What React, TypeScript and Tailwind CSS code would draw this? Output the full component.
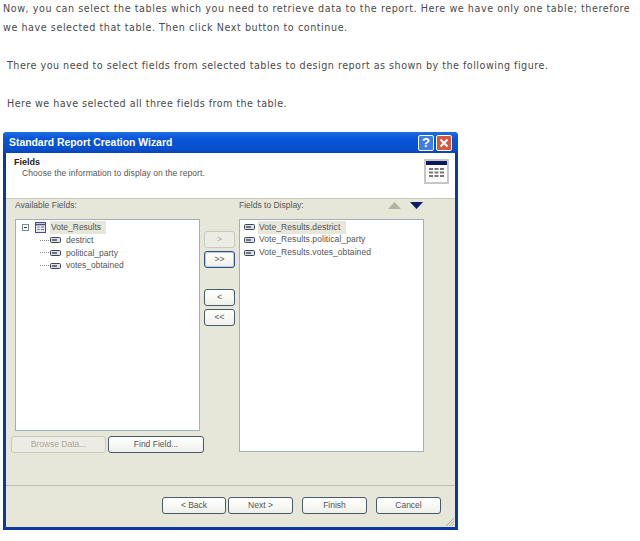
const FIELDS = ["destrict", "political_party", "votes_obtained"];

function FieldIcon() {
  return (
    <svg width="11" height="6" viewBox="0 0 11 6" className="shrink-0">
      <rect x="0.5" y="0.5" width="10" height="5" rx="1" fill="#dfe3e8" stroke="#3c4250" />
      <path d="M2 3h5" stroke="#3c4250" strokeWidth="1.4" />
    </svg>
  );
}

function TableIcon() {
  return (
    <svg width="11" height="11" viewBox="0 0 11 11" className="shrink-0">
      <rect x="0.5" y="0.5" width="10" height="10" fill="#e8e8f4" stroke="#4a4a86" />
      <path d="M1 2.500h9" stroke="#4a4a86" strokeWidth="1.4" />
      <path d="M2.500 5h2M2.500 7.500h2M6 5h3M6 7.500h3" stroke="#6a6a8a" />
    </svg>
  );
}

function WizButton({
  label,
  width,
  disabled,
  active,
}: {
  label: string;
  width: string;
  disabled?: boolean;
  active?: boolean;
}) {
  const border = disabled
    ? "border-[#c9c9bd] text-[#a8a8a0] bg-[#ecece4]"
    : active
      ? "border-[#35507c] text-[#555] bg-[linear-gradient(#ffffff,#f0f0ea)] shadow-[inset_0_0_0_1px_#b4cdec]"
      : "border-[#4b5a68] text-[#555] bg-[linear-gradient(#ffffff,#f0f0ea)]";
  return (
    <div
      className={`${width} h-[17px] shrink-0 flex items-center justify-center rounded-[3px] border text-[8.5px] leading-none ${border}`}
    >
      {label}
    </div>
  );
}

export default function App() {
  return (
    <div className="w-[640px] h-[541px] overflow-hidden bg-white font-['DejaVu_Sans',sans-serif] text-[#4a4a4a]">
      <div className="-mt-[1px] text-[9.6px] leading-[19px] tracking-[0.56px]">
        <p className="pl-[3px] whitespace-nowrap">
          Now, you can select the tables which you need to retrieve data to the report. Here we have only one table; therefore
        </p>
        <p className="pl-[3px] whitespace-nowrap">
          we have selected that table. Then click Next button to continue.
        </p>
        <p className="pl-[7px] mt-[19px] whitespace-nowrap tracking-[0.49px]">
          There you need to select fields from selected tables to design report as shown by the following figure.
        </p>
        <p className="pl-[7px] mt-[19px] whitespace-nowrap tracking-[0.45px]">
          Here we have selected all three fields from the table.
        </p>
      </div>

      {/* Wizard window */}
      <div className="ml-[3px] mt-[19px] w-[455px] h-[398px] flex flex-col border-x-[3px] border-b-[3px] border-[#0a3aa0] rounded-t-[4px] bg-[#e6e6d9] relative">
        <div className="-mx-[3px] h-[21px] shrink-0 flex items-center justify-between pl-[6px] pr-[6px] rounded-t-[4px] bg-[linear-gradient(#1f6fe0,#0a55d8_30%,#0650d0_80%,#0a44b0)]">
          <span className="font-['Liberation_Sans',sans-serif] font-bold text-[10.4px] text-white">
            Standard Report Creation Wizard
          </span>
          <div className="flex gap-[2px]">
            <div className="w-[16px] h-[16px] rounded-[2px] border border-white bg-[#3f7ee0] flex items-center justify-center font-['Liberation_Sans',sans-serif] font-bold text-[13px] leading-none text-white">
              ?
            </div>
            <div className="w-[16px] h-[16px] rounded-[2px] border border-white bg-[#d9583c] flex items-center justify-center">
              <svg width="10" height="10" viewBox="0 0 10 10">
                <path d="M1.500 1.500l7 7M8.500 1.500l-7 7" stroke="#fff" strokeWidth="2" />
              </svg>
            </div>
          </div>
        </div>

        <div className="h-[46px] shrink-0 bg-white border-b border-[#c8c8ba] flex justify-between pl-[8px] pr-[6px] pt-[4px] font-['Liberation_Sans',sans-serif]">
          <div>
            <div className="font-bold text-[9px] leading-[11px] text-[#222]">
              Fields
            </div>
            <div className="pl-[8px] text-[8.5px] leading-[11px] tracking-[0.08px] text-[#555]">
              Choose the information to display on the report.
            </div>
          </div>
          <div className="w-[25px] h-[25px] mt-[2px] bg-[#c6c6c6] p-[2px]">
            <svg width="21" height="21" viewBox="0 0 21 21">
              <rect width="21" height="21" fill="#fff" />
              <rect width="21" height="4" fill="#0a1a5c" />
              <path d="M3 8h4M8.500 8h4M14 8h4M3 11.500h4M8.500 11.500h4M14 11.500h4M3 15h4M8.500 15h4M14 15h4" stroke="#777" strokeWidth="2" />
            </svg>
          </div>
        </div>

        <div className="flex-1 flex flex-col font-['Liberation_Sans',sans-serif] text-[8.5px] text-[#555]">
          <div className="flex-1 flex pl-[9px] gap-[4px] border-b border-[#bdbdae]">
            <div className="w-[185px] shrink-0">
              <div className="h-[20px] pb-[7px] flex items-center">Available Fields:</div>
              <div className="h-[212px] bg-white border border-[#9fb0bc] pt-[1px] pl-[6px]">
                <div className="flex items-center h-[13px]">
                  <div className="w-[7px] h-[7px] border border-[#7a8a9a] mr-[6px] flex items-center justify-center">
                    <div className="w-[3px] h-px bg-[#333]" />
                  </div>
                  <TableIcon />
                  <span className="ml-[4px] px-[1px] w-[56px] bg-[#e6e6d9] leading-[13px]">Vote_Results</span>
                </div>
                {FIELDS.map((f) => (
                  <div key={f} className="flex items-center h-[12.67px] pl-[18px] whitespace-nowrap">
                    <div className="w-[9px] border-t border-dotted border-[#888] mr-[1px]" />
                    <FieldIcon />
                    <span className="ml-[5px]">{f}</span>
                  </div>
                ))}
              </div>
              <div className="flex gap-[2px] mt-[5px] -ml-[4px]">
                <WizButton label="Browse Data..." width="w-[95px]" disabled />
                <WizButton label="Find Field..." width="w-[96px]" />
              </div>
            </div>

            <div className="w-[31px] shrink-0 pt-[32px] flex flex-col">
              <WizButton label=">" width="w-[31px]" disabled />
              <div className="mt-[3px]">
                <WizButton label=">>" width="w-[31px]" active />
              </div>
              <div className="mt-[21px]">
                <WizButton label="<" width="w-[31px]" />
              </div>
              <div className="mt-[3px]">
                <WizButton label="<<" width="w-[31px]" />
              </div>
            </div>

            <div className="w-[185px] shrink-0">
              <div className="h-[20px] pb-[7px] flex items-center justify-between pr-[1px]">
                <span>Fields to Display:</span>
                <div className="flex gap-[9px]">
                  <div className="w-[13px] h-[7px] bg-[#b4b49e] [clip-path:polygon(50%_0,100%_100%,0_100%)]" />
                  <div className="w-[13px] h-[7px] bg-[#0a1a6c] [clip-path:polygon(0_0,100%_0,50%_100%)]" />
                </div>
              </div>
              <div className="h-[233px] bg-white border border-[#9fb0bc] pt-[1px] pl-[4px]">
                {FIELDS.map((f, i) => (
                  <div key={f} className="flex items-center h-[12.67px] whitespace-nowrap">
                    <FieldIcon />
                    <span className={`ml-[3px] px-[1px] leading-[13px] tracking-[0.07px] ${i === 0 ? "bg-[#e6e6d9] w-[88px]" : ""}`}>
                      Vote_Results.{f}
                    </span>
                  </div>
                ))}
              </div>
            </div>
          </div>

          <div className="h-[41px] shrink-0 flex items-start pt-[11px] pl-[156px]">
            <WizButton label="< Back" width="w-[64px]" />
            <div className="ml-[2px]">
              <WizButton label="Next >" width="w-[65px]" />
            </div>
            <div className="ml-[9px]">
              <WizButton label="Finish" width="w-[65px]" />
            </div>
            <div className="ml-[9px]">
              <WizButton label="Cancel" width="w-[65px]" />
            </div>
          </div>
        </div>

        {/* Resize grip */}
        <svg width="10" height="10" viewBox="0 0 10 10" className="absolute right-0 bottom-0">
          <path d="M9 1L1 9M9 4L4 9M9 7L7 9" stroke="#a8a898" />
        </svg>
      </div>
    </div>
  );
}
